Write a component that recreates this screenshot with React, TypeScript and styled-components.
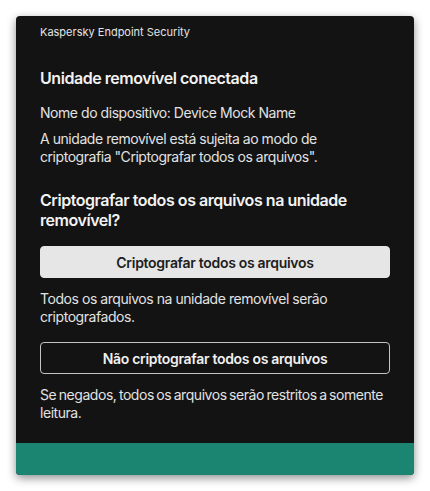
import React from "react";
import styled, { createGlobalStyle } from "styled-components";

const GlobalStyle = createGlobalStyle`
  html, body {
    margin: 0;
    padding: 0;
    background: #ffffff;
  }

  body {
    font-family: Inter, "Noto Sans", "Liberation Sans", sans-serif;
    -webkit-font-smoothing: antialiased;
  }
`;

const Page = styled.div`
  padding: 16px;
  width: 430px;
  height: 491px;
  box-sizing: border-box;
`;

const Dialog = styled.div`
  display: flex;
  flex-direction: column;
  width: 398px;
  height: 459px;
  background: #131313;
  border-radius: 4px;
  overflow: hidden;
  box-shadow: 0 3px 10px rgba(0, 0, 0, 0.45);
`;

const TitleBar = styled.div`
  padding: 8px 24px 0;
  font-size: 11px;
  line-height: 16px;
  color: #e4e4e4;
`;

const Content = styled.div`
  flex: 1;
  display: flex;
  flex-direction: column;
  padding: 28px 24px 0;
`;

const Heading = styled.h2<{ $gap: number }>`
  margin: 0 0 ${props => props.$gap}px;
  font-size: 16px;
  line-height: 20px;
  font-weight: 600;
  color: #f2f2f2;
  letter-spacing: -0.45px;
`;

const Text = styled.p<{ $gap?: number; $tight?: boolean }>`
  margin: 0 0 ${props => props.$gap ?? 0}px;
  font-size: 14px;
  line-height: 18px;
  color: #e2e2e2;
  letter-spacing: -0.45px;
  word-spacing: ${props => props.$tight ? "-1px" : "0"};
`;

const Button = styled.button<{ $primary?: boolean }>`
  display: flex;
  align-items: center;
  justify-content: center;
  height: 32px;
  margin: 0 0 12px;
  padding: 0 16px;
  font-family: inherit;
  font-size: 14px;
  font-weight: 600;
  letter-spacing: -0.3px;
  border-radius: 4px;
  box-sizing: border-box;
  cursor: pointer;
  background: ${props => props.$primary ? "#e6e6e6" : "transparent"};
  color: ${props => props.$primary ? "#1d1d1d" : "#f0f0f0"};
  border: 1px solid ${props => props.$primary ? "#e6e6e6" : "#c4c4c4"};
`;

const Footer = styled.div`
  height: 32px;
  background: #1b8571;
`;

const App = () => {
  return (
    <Page>
      <GlobalStyle />
      <Dialog>
        <TitleBar>Kaspersky Endpoint Security</TitleBar>
        <Content>
          <Heading $gap={16}>Unidade removível conectada</Heading>
          <Text $gap={8}>Nome do dispositivo: Device Mock Name</Text>
          <Text $gap={24}>
            A unidade removível está sujeita ao modo de criptografia "Criptografar todos os arquivos".
          </Text>
          <Heading $gap={16}>Criptografar todos os arquivos na unidade removível?</Heading>
          <Button $primary>Criptografar todos os arquivos</Button>
          <Text $gap={16}>Todos os arquivos na unidade removível serão criptografados.</Text>
          <Button>Não criptografar todos os arquivos</Button>
          <Text $tight>Se negados, todos os arquivos serão restritos a somente leitura.</Text>
        </Content>
        <Footer />
      </Dialog>
    </Page>
  );
};

export default App;
